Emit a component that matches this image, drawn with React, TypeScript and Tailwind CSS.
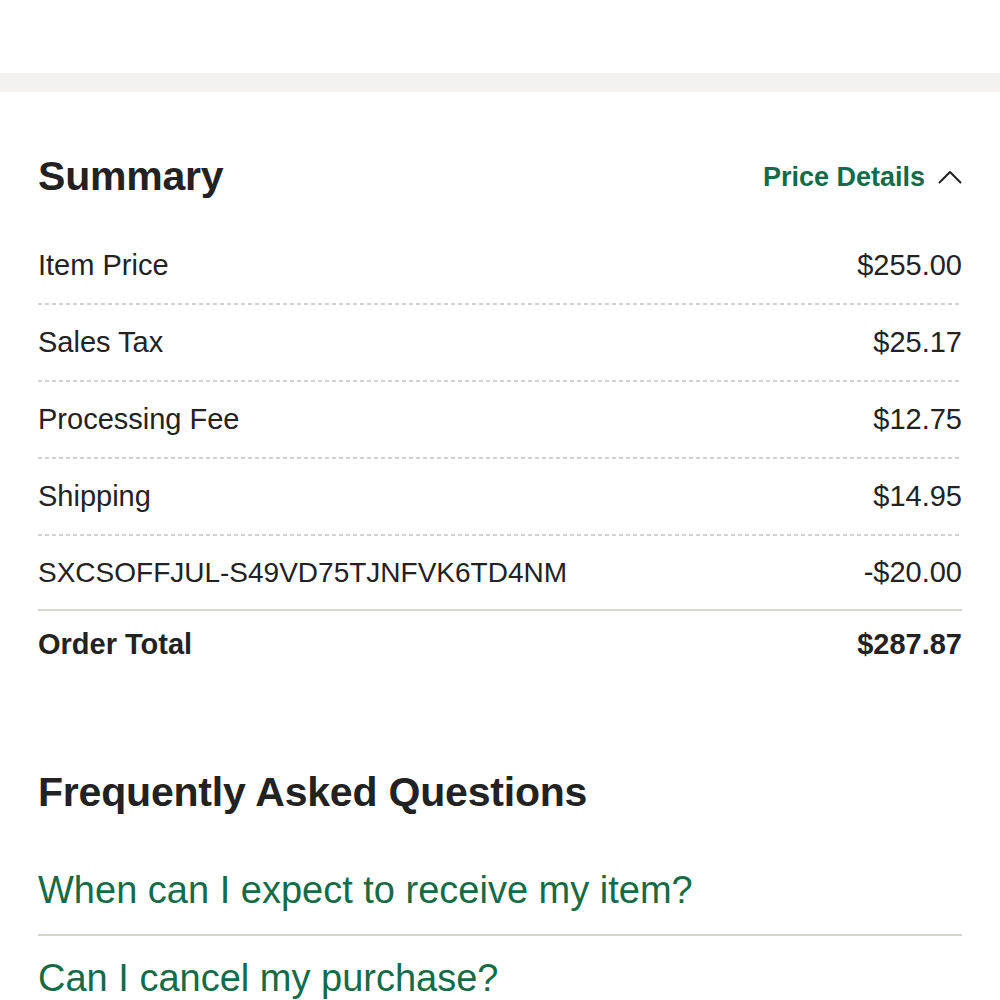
const rows = [
  { label: "Item Price", value: "$255.00" },
  { label: "Sales Tax", value: "$25.17" },
  { label: "Processing Fee", value: "$12.75" },
  { label: "Shipping", value: "$14.95" },
];

function Dashes() {
  return (
    <div className="h-[2px] w-full bg-[linear-gradient(to_right,#d2d2d0_4px,transparent_4px)] bg-[length:7px_2px] bg-repeat-x" />
  );
}

function Caret() {
  return (
    <svg width="24" height="14" viewBox="0 0 24 14" fill="none" className="text-[#222]">
      <path d="M1.5 12.5 12 2l10.5 10.5" stroke="currentColor" strokeWidth="2" strokeLinecap="round" strokeLinejoin="round" />
    </svg>
  );
}

export default function App() {
  return (
    <div className="min-h-screen bg-white text-[#222] font-['Liberation_Sans',Arial,sans-serif]">
      <div className="h-[73px] bg-white" />
      <div className="h-[19px] bg-[#f3f2f0]" />

      <main className="px-[38px]">
        <section className="pt-[50px]">
          <header className="h-[70px] flex items-center justify-between">
            <h2 className="text-[41px] font-semibold tracking-[-0.2px]">Summary</h2>
            <button className="flex items-center gap-[13px] text-[#136b48] text-[27px] font-semibold">
              Price Details
              <Caret />
            </button>
          </header>

          <div className="mt-[16px]">
            {rows.map((r) => (
              <div key={r.label}>
                <div className="h-[75px] flex items-center justify-between text-[29px]">
                  <span>{r.label}</span>
                  <span>{r.value}</span>
                </div>
                <Dashes />
              </div>
            ))}
            <div className="h-[75px] flex items-center justify-between text-[29px] border-b-2 border-[#d6d6d0]">
              <span className="text-[28px]">SXCSOFFJUL-S49VD75TJNFVK6TD4NM</span>
              <span>-$20.00</span>
            </div>
            <div className="h-[68px] flex items-center justify-between text-[29px] font-bold">
              <span>Order Total</span>
              <span>$287.87</span>
            </div>
          </div>
        </section>

        <section className="mt-[84px]">
          <h2 className="h-[60px] flex items-center text-[41px] font-semibold tracking-[-0.2px]">
            Frequently Asked Questions
          </h2>
          <div className="mt-[24px]">
            <div className="h-[89px] flex items-center text-[38px] text-[#136b48] border-b-2 border-[#d6d6d0]">
              When can I expect to receive my item?
            </div>
            <div className="h-[86px] flex items-center text-[38px] text-[#136b48] border-b-2 border-[#d6d6d0]">
              Can I cancel my purchase?
            </div>
          </div>
        </section>
      </main>
    </div>
  );
}
